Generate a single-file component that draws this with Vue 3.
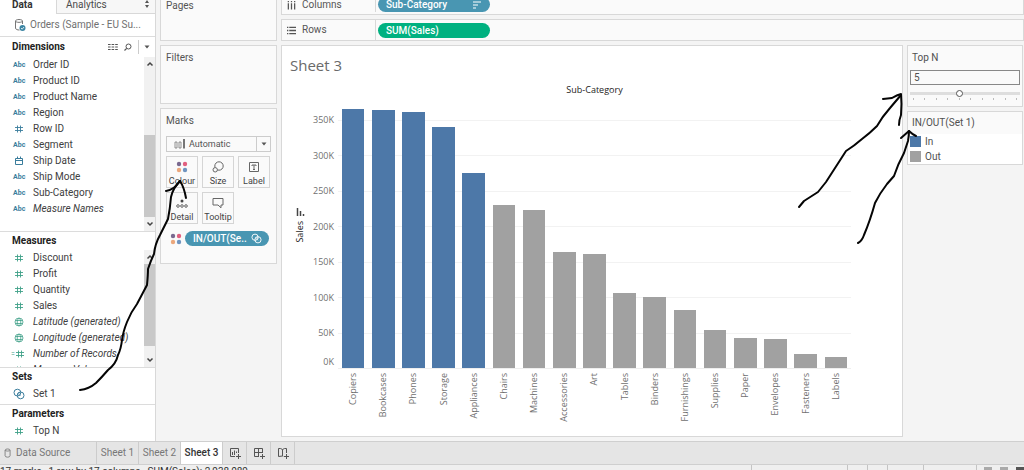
<script setup>
const dimensions = [
  { icon: 'abc', name: 'Order ID' },
  { icon: 'abc', name: 'Product ID' },
  { icon: 'abc', name: 'Product Name' },
  { icon: 'abc', name: 'Region' },
  { icon: 'hash', name: 'Row ID' },
  { icon: 'abc', name: 'Segment' },
  { icon: 'date', name: 'Ship Date' },
  { icon: 'abc', name: 'Ship Mode' },
  { icon: 'abc', name: 'Sub-Category' },
  { icon: 'abc', name: 'Measure Names', generated: true },
]
const measures = [
  { icon: 'hash', name: 'Discount' },
  { icon: 'hash', name: 'Profit' },
  { icon: 'hash', name: 'Quantity' },
  { icon: 'hash', name: 'Sales' },
  { icon: 'globe', name: 'Latitude (generated)', generated: true },
  { icon: 'globe', name: 'Longitude (generated)', generated: true },
  { icon: 'calc', name: 'Number of Records', generated: true },
  { icon: 'hash', name: 'Measure Values', generated: true },
]
const axisMax = 380
const bars = [
  ['Copiers', 364.5], ['Bookcases', 362.5], ['Phones', 360], ['Storage', 339], ['Appliances', 274.5],
  ['Chairs', 229], ['Machines', 222.5], ['Accessories', 163.5], ['Art', 160], ['Tables', 105],
  ['Binders', 100], ['Furnishings', 81], ['Supplies', 53.5], ['Paper', 42.5], ['Envelopes', 40.5],
  ['Fasteners', 20], ['Labels', 16],
].map(([name, value], i) => ({ name, value, inSet: i < 5 }))
const ticks = [350, 300, 250, 200, 150, 100, 50]
</script>

<template>
  <div class="app">
    <svg class="defs" aria-hidden="true">
      <symbol id="hash" viewBox="0 0 10 10"><path d="M3.5 1.5v7M6.5 1.5v7M1 3.5h8M1 6.5h8" fill="none" stroke="currentColor" stroke-width=".9" /></symbol>
      <symbol id="date" viewBox="0 0 10 10"><path d="M1.5 2.5h7v6h-7zM1.5 4.5h7M3.5 .5v2M6.5 .5v2" fill="none" stroke="currentColor" /></symbol>
      <symbol id="globe" viewBox="0 0 10 10"><path d="M5 1a4 4 0 1 0 0 8a4 4 0 1 0 0-8M1.5 3.5h7M1.5 6.5h7M5 1C2.6 3 2.6 7 5 9C7.4 7 7.4 3 5 1" fill="none" stroke="currentColor" stroke-width=".8" /></symbol>
      <symbol id="set" viewBox="0 0 12 12"><g fill="none" stroke="currentColor"><circle cx="4.400" cy="4.600" r="3.400" /><circle cx="7.600" cy="7.400" r="3.400" /><path d="M4.600 5l3 3M6 4.200l1.800 1.800" stroke-width=".7" /></g></symbol>
      <symbol id="dots" viewBox="0 0 12 12"><circle cx="3" cy="3" r="2.200" fill="#79698f" /><circle cx="9" cy="3" r="2.200" fill="#e2607f" /><circle cx="3" cy="9" r="2.200" fill="#eba77c" /><circle cx="9" cy="9" r="2.200" fill="#6f94c0" /></symbol>
      <symbol id="up" viewBox="0 0 8 6"><path d="M1.500 4.500L4 2l2.500 2.500" fill="none" stroke="#444" stroke-width="1.500" /></symbol>
      <symbol id="down" viewBox="0 0 8 6"><path d="M1.500 1.500L4 4l2.500-2.500" fill="none" stroke="#444" stroke-width="1.500" /></symbol>
      <symbol id="db" viewBox="0 0 12 12"><path d="M2.500 2.500v7c0 2 6 2 6 0v-7c0-1.800-6-1.800-6 0c0 1.600 6 1.600 6 0" fill="none" stroke="currentColor" /></symbol>
    </svg>

    <main class="workspace">
      <aside class="data-pane">
        <div class="pane-tabs">
          <button class="pane-tab active">Data</button>
          <button class="pane-tab">Analytics
            <svg class="sorter" viewBox="0 0 6 8"><path d="M3 0l2 3H1zM3 8l2-3H1z" fill="#555" /></svg>
          </button>
        </div>
        <div class="source">
          <svg viewBox="0 0 12 14"><path d="M1.500 3v7c0 1.500 2 2 4 2M8.500 6V3c0-2-7-2-7 0c0 1.800 7 1.800 7 0" fill="none" stroke="#777" /><circle cx="8.500" cy="10" r="3" fill="#3d86a4" /><path d="M7 10l1.200 1.200L10 9" fill="none" stroke="#fff" stroke-width=".8" /></svg>
          <span>Orders (Sample - EU Su...</span>
        </div>
        <section class="section dims">
          <header class="dims-head">
            <h2>Dimensions</h2>
            <svg class="tool" viewBox="0 0 10 8"><path d="M0 1.500h2.600M3.600 1.500h2.600M7.200 1.500h2.600M0 4h2.600M3.600 4h2.600M7.200 4h2.600M0 6.500h2.600M3.600 6.500h2.600M7.200 6.500h2.600" stroke="#555" /></svg>
            <svg class="tool" viewBox="0 0 10 8"><circle cx="5.500" cy="3.500" r="2.500" fill="none" stroke="#555" /><path d="M3.700 5.300L1.500 7.500" stroke="#555" stroke-width="1.200" /></svg>
            <button class="menu" aria-label="Dimensions menu"><svg viewBox="0 0 6 4"><path d="M.5 .5h5L3 3.500z" fill="#555" /></svg></button>
          </header>
          <div class="scroller">
            <ul class="fields">
              <li v-for="f in dimensions" :key="f.name" :class="{ generated: f.generated }">
                <span v-if="f.icon === 'abc'" class="abc">Abc</span>
                <svg v-else class="icon"><use :href="'#' + f.icon" /></svg>
                <span>{{ f.name }}</span>
              </li>
            </ul>
            <div class="scrollbar"><svg><use href="#up" /></svg><div class="track"><i class="thumb low"></i></div><svg><use href="#down" /></svg></div>
          </div>
        </section>
        <section class="section meas">
          <h2>Measures</h2>
          <div class="scroller">
            <ul class="fields green">
              <li v-for="f in measures" :key="f.name" :class="{ generated: f.generated }">
                <span v-if="f.icon === 'calc'" class="calc">=<svg class="icon"><use href="#hash" /></svg></span>
                <svg v-else class="icon"><use :href="'#' + f.icon" /></svg>
                <span>{{ f.name }}</span>
              </li>
            </ul>
            <div class="scrollbar"><svg><use href="#up" /></svg><div class="track"><i class="thumb high"></i></div><svg><use href="#down" /></svg></div>
          </div>
        </section>
        <section class="section small">
          <h2>Sets</h2>
          <ul class="fields"><li><svg class="icon large"><use href="#set" /></svg><span>Set 1</span></li></ul>
        </section>
        <section class="section small">
          <h2>Parameters</h2>
          <ul class="fields green"><li><svg class="icon"><use href="#hash" /></svg><span>Top N</span></li></ul>
        </section>
      </aside>

      <div class="cards">
        <section class="card pages">Pages</section>
        <section class="card filters">Filters</section>
        <section class="card marks">
          <span>Marks</span>
          <button class="mark-type">
            <svg class="bars-icon" viewBox="0 0 12 10"><path d="M1 3h2v6H1zM5 3h2v6H5z" fill="none" stroke="#777" stroke-width=".8" /><path d="M10 0v9.500" stroke="#555" stroke-width="1.600" /></svg>
            <span>Automatic</span>
            <i><svg viewBox="0 0 6 4"><path d="M.5 .5h5L3 3.500z" fill="#555" /></svg></i>
          </button>
          <div class="mark-grid">
            <button><svg><use href="#dots" /></svg>Colour</button>
            <button><svg viewBox="0 0 12 12"><g fill="none" stroke="#666"><circle cx="7" cy="5" r="4.200" /><circle cx="3.200" cy="8.800" r="2.200" fill="#fafafa" /></g></svg>Size</button>
            <button><svg viewBox="0 0 12 12"><path d="M1.500 1.500h9v9h-9zM4 5V4h4v1M6 4v4.500M5 8.500h2" fill="none" stroke="#666" /></svg>Label</button>
            <button><svg viewBox="0 0 12 12"><circle cx="6" cy="4" r="1.500" fill="#444" /><g fill="none" stroke="#555" stroke-width=".9"><circle cx="2" cy="9" r="1.300" /><circle cx="6" cy="9" r="1.300" /><circle cx="10" cy="9" r="1.300" /></g></svg>Detail</button>
            <button><svg viewBox="0 0 12 12"><path d="M1 1.500h10v6.500H9v2.800L6 8H1z" fill="none" stroke="#666" /></svg>Tooltip</button>
          </div>
          <div class="encoding">
            <svg><use href="#dots" /></svg>
            <button class="pill blue">IN/OUT(Se..<svg class="set-icon"><use href="#set" /></svg></button>
          </div>
        </section>
      </div>

      <div class="canvas">
        <div class="shelf columns">
          <div class="shelf-name"><svg viewBox="0 0 10 10"><path d="M1.500 0v1.500M5 0v1.500M8.500 0v1.500M1.500 2.500v7M5 2.500v7M8.500 2.500v7" stroke="#555" stroke-width="1.400" /></svg>Columns</div>
          <button class="pill blue">Sub-Category<svg class="sort" viewBox="0 0 8 8"><path d="M0 1h8M0 4h5M0 7h3" stroke="#fff" stroke-width="1.200" /></svg></button>
        </div>
        <div class="shelf rows">
          <div class="shelf-name"><svg viewBox="0 0 10 10"><path d="M0 1.500h1.500M0 5h1.500M0 8.500h1.500M2.500 1.500h7.500M2.500 5h7.500M2.500 8.500h7.500" stroke="#555" stroke-width="1.400" /></svg>Rows</div>
          <button class="pill sum">SUM(Sales)</button>
        </div>
        <div class="view">
          <section class="sheet">
            <h1>Sheet 3</h1>
            <div class="chart">
              <div class="chart-title">Sub-Category</div>
              <div class="y-name"><svg viewBox="0 0 8 8"><path d="M1.500 0v8M4.500 3v5M7.500 6v2" stroke="#444" stroke-width="1.500" /></svg><span>Sales</span></div>
              <div class="y-axis">
                <div v-for="t in ticks" :key="t" class="tick"><span>{{ t }}K</span></div>
                <div class="zero">0K</div>
              </div>
              <div class="plot">
                <div class="lines"><i v-for="t in ticks" :key="t"></i></div>
                <div class="bars">
                  <div v-for="b in bars" :key="b.name" class="slot">
                    <div class="bar" :class="{ in: b.inSet }" :style="{ height: (b.value / axisMax) * 100 + '%' }"></div>
                  </div>
                </div>
              </div>
              <div class="x-axis"><div v-for="b in bars" :key="b.name"><span>{{ b.name }}</span></div></div>
            </div>
          </section>
          <aside class="controls">
            <section class="param">
              <label for="top-n">Top N</label>
              <input id="top-n" class="value" type="text" value="5" />
              <input class="slider" type="range" min="1" max="10" step="0.1" value="5" aria-label="Top N slider" />
              <div class="marks-row"><i v-for="n in 10" :key="n"></i></div>
            </section>
            <section class="legend">
              <h3>IN/OUT(Set 1)</h3>
              <div><i class="in"></i>In</div>
              <div><i></i>Out</div>
            </section>
          </aside>
        </div>
      </div>
    </main>

    <nav class="sheet-tabs">
      <button class="source-tab"><svg><use href="#db" /></svg>Data Source</button>
      <button>Sheet 1</button>
      <button>Sheet 2</button>
      <button class="current">Sheet 3</button>
      <button class="add" aria-label="New worksheet"><svg viewBox="0 0 12 12"><path d="M6 9.500H1.500v-8h8V6M3.500 8V5M5.500 8V3.500M7.500 6V4.500M9.500 7v5M7 9.500h5" fill="none" stroke="#555" /></svg></button>
      <button class="add" aria-label="New dashboard"><svg viewBox="0 0 12 12"><path d="M6 9.500H1.500v-8h8V6M5.500 1.500v8M1.500 5.500h8M9.500 7v5M7 9.500h5" fill="none" stroke="#555" /></svg></button>
      <button class="add" aria-label="New story"><svg viewBox="0 0 12 12"><path d="M6 9.500L5.500 9L1.500 9.500v-8l2 0l2 1l2-1h2V6M5.500 2.500V9M9.500 7v5M7 9.500h5" fill="none" stroke="#555" /></svg></button>
    </nav>
    <footer class="status">
      <span>17 marks</span><span>1 row by 17 columns</span><span>SUM(Sales): 2,938,089</span>
      <div class="status-cells"><i class="wide"></i><i></i><i></i><i class="mid"></i><i class="mid"></i><i class="views"><b></b><b></b><b class="on"></b></i></div>
    </footer>

    <svg class="ink" viewBox="0 0 1024 470" preserveAspectRatio="none" aria-hidden="true">
      <g fill="none" stroke="#050505" stroke-width="2" stroke-linecap="round" stroke-linejoin="round">
        <path d="M80 390q9-1 16-7q6-6 12-13q8-6 10-15q3-6 4-15q1-8 5-18q4-10 10-18l10-19q1-10 1-16q3-9 6-15q1-10 6-19l8-16q2-10 3-22q2-9 9-16" />
        <path d="M166 191q8-1 14-10q4 6 6 17" />
        <path d="M799 207l5-6l14-9l8-10l20-31q8-5 16-12q8-6 15-13q5-9 13-18l11-13" />
        <path d="M883 99l9-1q5-3 9-4q1 10 0 21q-2 5-2 10" />
        <path d="M858 243q4-2 6-8q6-14 11-32q5-10 12-19l7-8q4-12 10-23l4-12q1-5 1-10" />
        <path d="M901 138l8-7q3 3 7 5" />
      </g>
    </svg>
  </div>
</template>

<style>
body { margin: 0; }
</style>
<style scoped>
* { box-sizing: border-box; }
.app { position: relative; height: 100vh; display: flex; flex-direction: column; overflow: hidden; background: #f4f4f4; color: #4b4b4b; font: 10px/16px Roboto, "Open Sans", sans-serif; }
.defs { display: none; }
button { font: inherit; color: inherit; margin: 0; padding: 0; border: 0; background: none; }
h1, h2, h3, ul { margin: 0; padding: 0; font-weight: 400; list-style: none; }
svg { flex: none; overflow: visible; }
.workspace { flex: 1; min-height: 0; display: grid; grid-template-columns: 156px 117px minmax(0, 1fr); column-gap: 4px; }
.data-pane { display: flex; flex-direction: column; min-height: 0; background: #fff; border-right: 1px solid #d8d8d8; }
.pane-tabs { display: flex; height: 14px; flex: none; }
.pane-tab { width: 56px; line-height: 10px; padding: 0 0 4px 12px; text-align: left; }
.pane-tab.active { font-weight: 700; color: #333; }
.pane-tab:not(.active) { flex: 1; display: flex; justify-content: space-between; padding: 0 5px 3px 9px; background: #f7f7f7; border-left: 1px solid #d8d8d8; border-bottom: 1px solid #d8d8d8; }
.sorter { width: 6px; height: 8px; }
.source { display: flex; align-items: center; gap: 4px; height: 23px; flex: none; padding-left: 14px; border-bottom: 1px solid #dcdcdc; color: #707070; }
.source svg { width: 12px; height: 14px; }
.section { border-bottom: 1px solid #dcdcdc; display: flex; flex-direction: column; min-height: 0; flex: none; }
.section:last-child { border-bottom: 0; }
h2 { font-size: 10px; font-weight: 700; color: #222; padding-left: 12px; line-height: 18px; }
.dims { flex: 195 1 0; }
.meas { flex: 136 1 0; }
.dims-head { display: flex; align-items: center; height: 20px; flex: none; }
.dims-head h2 { flex: 1; }
.tool { width: 10px; height: 8px; margin-right: 5px; }
.menu { width: 17px; height: 14px; border-left: 1px solid #ccc; display: grid; place-items: center; }
.menu svg { width: 6px; height: 4px; }
.scroller { display: flex; flex: 1; min-height: 0; overflow: hidden; }
.fields { flex: 1; min-width: 0; color: #404040; }
.fields li { display: flex; align-items: center; height: 16px; white-space: nowrap; }
.fields li > :first-child { width: 33px; flex: none; padding-left: 13px; color: #3a7d9c; }
.fields li > svg.icon { width: 10px; height: 10px; margin: 0 9px 0 14px; padding: 0; }
.fields li > svg.large { width: 12px; height: 12px; margin: 0 8px 0 13px; }
.fields.green li > :first-child { color: #3fa088; }
.fields .abc { font-size: 7px; font-weight: 700; }
.generated .abc { font-style: normal; }
.fields .calc { display: flex; align-items: center; font-size: 7px; font-style: normal; }
.fields .generated > .calc:first-child { padding-left: 11px; }
.calc svg { width: 10px; height: 10px; }
.generated { font-style: italic; }
.scrollbar { width: 11px; background: #f1f1f1; display: flex; flex-direction: column; align-items: center; padding: 4px 0; }
.scrollbar svg { width: 8px; height: 6px; }
.track { flex: 1; width: 100%; display: flex; flex-direction: column; padding: 4px 0; }
.thumb { height: 56%; background: #c8c8c8; }
.thumb.low { margin-top: auto; }
.thumb.high { height: 92%; }
.small .fields { flex: none; height: 18px; }
.cards { display: flex; flex-direction: column; gap: 4px; }
.card { background: #fafafa; border: 1px solid #d8d8d8; padding: 4px 5px; color: #555; }
.pages { height: 41px; border-top: 0; padding-top: 0; line-height: 12px; }
.filters { height: 59px; }
.marks { height: 156px; }
.mark-type { width: 105px; height: 16px; margin-top: 7px; display: flex; align-items: center; border: 1px solid #ccc; padding-left: 7px; gap: 3px; font-size: 9px; }
.bars-icon { width: 12px; height: 10px; }
.mark-type span { flex: 1; text-align: left; }
.mark-type i { width: 14px; height: 14px; display: grid; place-items: center; border-left: 1px solid #ccc; }
.mark-type i svg { width: 6px; height: 4px; }
.mark-grid { display: grid; grid-template-columns: repeat(3, 32px); gap: 4px; margin-top: 4px; }
.mark-grid button { height: 32px; border: 1px solid #d5d5d5; display: flex; flex-direction: column; align-items: center; justify-content: space-between; padding-top: 4px; line-height: 12px; font-size: 9px; color: #444; white-space: nowrap; }
.mark-grid svg { width: 12px; height: 12px; }
.encoding { display: flex; align-items: center; gap: 3px; margin-top: 7px; padding-left: 4px; }
.encoding > svg { width: 12px; height: 12px; }
.encoding .pill { flex: none; width: 84px; padding: 0 7px 0 8px; }
.set-icon { width: 11px; height: 11px; }
.pill { height: 15px; width: 112px; border-radius: 8px; color: #fff; display: flex; align-items: center; justify-content: space-between; padding: 0 9px 0 8px; line-height: 15px; font-weight: 500; }
.blue { background: #4996b2; }
.sum { background: #00b180; }
.sort { width: 8px; height: 8px; }
.canvas { display: flex; flex-direction: column; min-width: 0; gap: 4px; }
.shelf { display: flex; align-items: center; background: #fafafa; border: 1px solid #d8d8d8; flex: none; gap: 2px; }
.columns { height: 15px; border-top: 0; align-items: flex-end; padding-bottom: 2px; }
.rows { height: 22px; }
.shelf-name { width: 94px; height: 20px; display: flex; align-items: center; gap: 6px; padding-left: 5px; border-right: 1px solid #d8d8d8; color: #555; }
.columns .shelf-name { height: 12px; padding-bottom: 2px; }
.shelf-name svg { width: 9px; height: 9px; }
.view { flex: 1; min-height: 0; display: grid; grid-template-columns: minmax(0, 1fr) 116px; gap: 4px; padding: 0 1px 4px 0; }
.sheet { background: #fff; border: 1px solid #d8d8d8; display: flex; flex-direction: column; min-height: 0; }
h1 { font: 15px/20px "Open Sans", sans-serif; color: #6a6a6a; padding: 9px 8px 8px; }
.chart { flex: 1; min-height: 0; display: grid; grid-template-columns: 28px 24px minmax(0, 1fr); grid-template-rows: 15px minmax(0, 1fr) 67px; padding-right: 51px; font: 9px/14px "Open Sans", sans-serif; }
.chart-title { grid-column: 3; margin-left: 4px; text-align: center; line-height: 14px; color: #222; }
.y-name { grid-column: 1; grid-row: 2; display: flex; flex-direction: column; align-items: center; justify-content: center; gap: 5px; padding-left: 8px; padding-bottom: 16px; color: #222; }
.y-name svg { width: 8px; height: 8px; }
.y-name span, .x-axis span { writing-mode: vertical-rl; transform: rotate(180deg); }
.y-name span { line-height: 12px; }
.y-axis { grid-column: 2; grid-row: 2; display: flex; flex-direction: column; padding-top: 22px; text-align: right; color: #707070; }
.tick { flex: 1; min-height: 0; }
.tick span { display: block; line-height: 14px; margin-top: -7px; }
.zero { height: 0; line-height: 14px; display: flex; align-items: flex-end; justify-content: flex-end; }
.plot { grid-column: 3; grid-row: 2; display: grid; min-height: 0; margin-left: 4px; border-bottom: 1px solid #eee; }
.lines, .bars { grid-area: 1 / 1; min-height: 0; display: flex; }
.lines { flex-direction: column; padding-top: 22px; }
.lines i { flex: 1; border-top: 1px solid #f2f2f2; }
.slot { flex: 1; display: flex; justify-content: center; align-items: flex-end; }
.bar { width: 75%; background: #a1a1a1; }
.bar.in { background: #4d78a8; }
.x-axis { grid-column: 3; display: flex; margin-left: 4px; color: #707070; padding-top: 4px; }
.x-axis div { flex: 1; display: flex; justify-content: center; align-items: flex-start; }
.x-axis span { line-height: 14px; }
.controls { display: flex; flex-direction: column; gap: 4px; color: #505050; }
.param { background: #fafafa; border: 1px solid #d8d8d8; padding: 3px 2px 3px; display: flex; flex-direction: column; height: 62px; }
.param label { padding-left: 2px; line-height: 18px; margin-bottom: 3px; }
.value { width: 100%; height: 15px; border: 1px solid #888; background: #fafafa; font: inherit; color: inherit; padding: 0 3px; border-radius: 0; }
.slider { appearance: none; width: 100%; height: 9px; margin: 4px 0 0; background: linear-gradient(#dedede, #dedede) center / 100% 3px no-repeat; }
.slider::-webkit-slider-thumb { appearance: none; width: 7px; height: 7px; border: 1px solid #555; border-radius: 50%; background: #fff; }
.marks-row { display: flex; justify-content: space-between; padding: 0 3px; }
.marks-row i { width: 1px; height: 2px; background: #bbb; }
.legend { background: #fff; border: 1px solid #d8d8d8; }
.legend h3 { font-size: 10px; line-height: 22px; padding-left: 4px; background: #fafafa; }
.legend div { display: flex; align-items: center; gap: 4px; height: 15px; padding-left: 2px; }
.legend div i { width: 11px; height: 11px; background: #a1a1a1; }
.legend div i.in { background: #4d78a8; }
.sheet-tabs { flex: none; height: 24px; display: flex; background: #e5e5e5; border-top: 1px solid #cfcfcf; border-bottom: 1px solid #cfcfcf; color: #777; }
.sheet-tabs button { min-width: 42px; border-right: 1px solid #ccc; white-space: nowrap; }
.sheet-tabs .source-tab { width: 97px; display: flex; align-items: center; gap: 3px; padding-left: 3px; }
.source-tab svg { width: 10px; height: 10px; }
.sheet-tabs .current { background: #fff; color: #333; font-weight: 500; }
.sheet-tabs .add { min-width: 24px; display: grid; place-items: center; }
.add svg { width: 12px; height: 12px; }
.status { height: 5px; flex: none; overflow: hidden; display: flex; gap: 7px; line-height: 13px; background: #efefef; color: #333; white-space: nowrap; }
.status-cells { margin-left: auto; display: flex; }
.status-cells > i { width: 20px; border-left: 1px solid #c4c4c4; }
.status-cells .wide { width: 96px; }
.status-cells .mid { width: 36px; }
.status-cells .mid + .mid { width: 53px; }
.status-cells .views { width: 48px; display: flex; justify-content: space-between; align-items: flex-end; padding-left: 7px; }
.views b { width: 8px; height: 3px; background: #aaa; }
.views b.on { background: #555; }
.ink { position: absolute; inset: 0; width: 100%; height: 100%; pointer-events: none; }
</style>
